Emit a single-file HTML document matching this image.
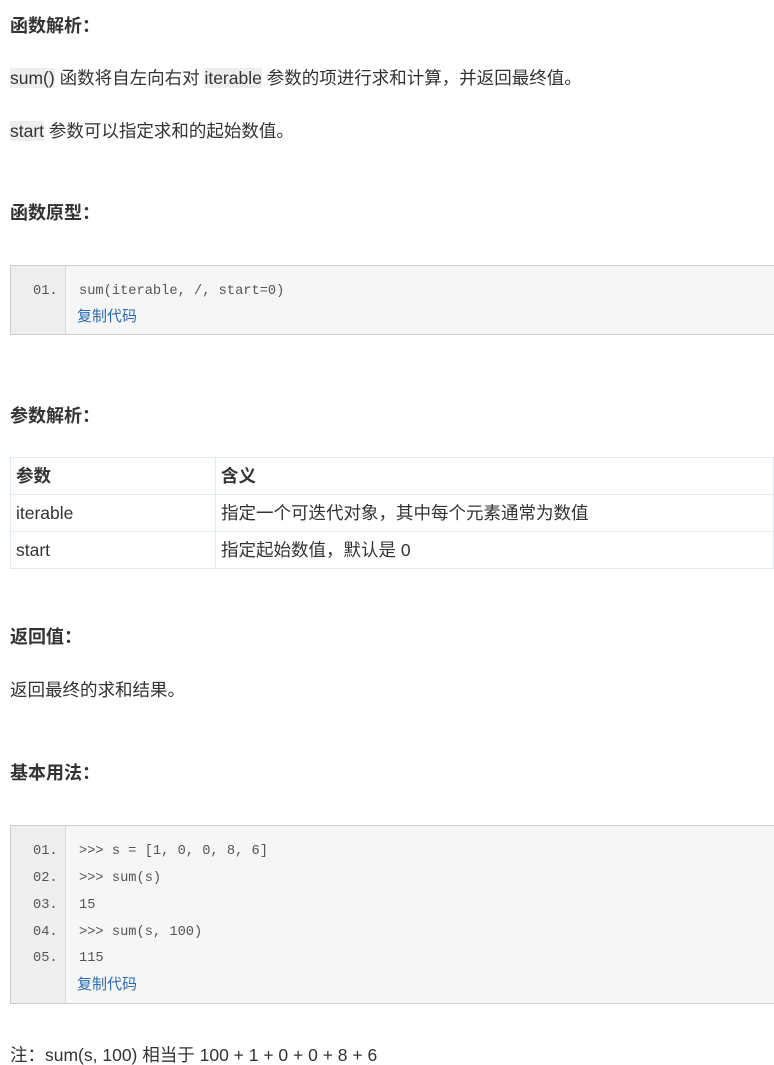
<!DOCTYPE html>
<html><head><meta charset="utf-8"><style>
body{margin:0;width:774px;height:1064px;overflow:hidden;background:#fff;color:#333;font-family:"Liberation Sans","Noto Sans CJK SC",sans-serif;font-size:17.5px;position:relative}
.a{position:absolute;white-space:nowrap;line-height:20px}
h3{position:absolute;margin:0;font-size:18px;font-weight:bold;line-height:20px;left:10px;color:#333}
.k{background:#eee}
.code{position:absolute;left:10px;width:770px;background:#f6f6f6;border:1px solid #ccc;box-sizing:border-box}
.gut{position:absolute;left:0;top:0;bottom:0;width:54px;background:#eee;border-right:1px solid #ddd}
.ln{position:absolute;font-family:"Liberation Mono",monospace;font-size:13.7px;color:#555;line-height:16px}
.num{left:22px}
.tx{left:68px}
.cp{position:absolute;left:66px;font-size:15px;color:#2b6cb0;line-height:16px}
table{position:absolute;left:10px;top:457px;width:764px;border-collapse:collapse}
td,th{border:1px solid #dfeaf3;height:36px;padding:0 5px;text-align:left;font-size:17.5px;line-height:20px;vertical-align:middle}
th{font-weight:bold}
</style></head><body>
<h3 style="top:16px">函数解析：</h3>
<div class="a" style="left:10px;top:68px"><span class="k">sum()</span> 函数将自左向右对 <span class="k">iterable</span> 参数的项进行求和计算，并返回最终值。</div>
<div class="a" style="left:10px;top:121px"><span class="k">start</span> 参数可以指定求和的起始数值。</div>
<h3 style="top:203px">函数原型：</h3>
<div class="code" style="top:265px;height:70px"><div class="gut"></div>
<div class="ln num" style="top:18px">01.</div><div class="ln tx" style="top:18px">sum(iterable, /, start=0)</div>
<div class="cp" style="top:43px">复制代码</div></div>
<h3 style="top:406px">参数解析：</h3>
<table><tr><th style="width:194px">参数</th><th>含义</th></tr>
<tr><td>iterable</td><td>指定一个可迭代对象，其中每个元素通常为数值</td></tr>
<tr><td>start</td><td>指定起始数值，默认是 0</td></tr></table>
<h3 style="top:627px">返回值：</h3>
<div class="a" style="left:10px;top:680px">返回最终的求和结果。</div>
<h3 style="top:763px">基本用法：</h3>
<div class="code" style="top:825px;height:179px"><div class="gut"></div>
<div class="ln num" style="top:18px">01.</div><div class="ln tx" style="top:18px">&gt;&gt;&gt; s = [1, 0, 0, 8, 6]</div>
<div class="ln num" style="top:45px">02.</div><div class="ln tx" style="top:45px">&gt;&gt;&gt; sum(s)</div>
<div class="ln num" style="top:72px">03.</div><div class="ln tx" style="top:72px">15</div>
<div class="ln num" style="top:99px">04.</div><div class="ln tx" style="top:99px">&gt;&gt;&gt; sum(s, 100)</div>
<div class="ln num" style="top:125px">05.</div><div class="ln tx" style="top:125px">115</div>
<div class="cp" style="top:151px">复制代码</div></div>
<div class="a" style="left:10px;top:1045px">注：sum(s, 100) 相当于 100 + 1 + 0 + 0 + 8 + 6</div>
</body></html>
